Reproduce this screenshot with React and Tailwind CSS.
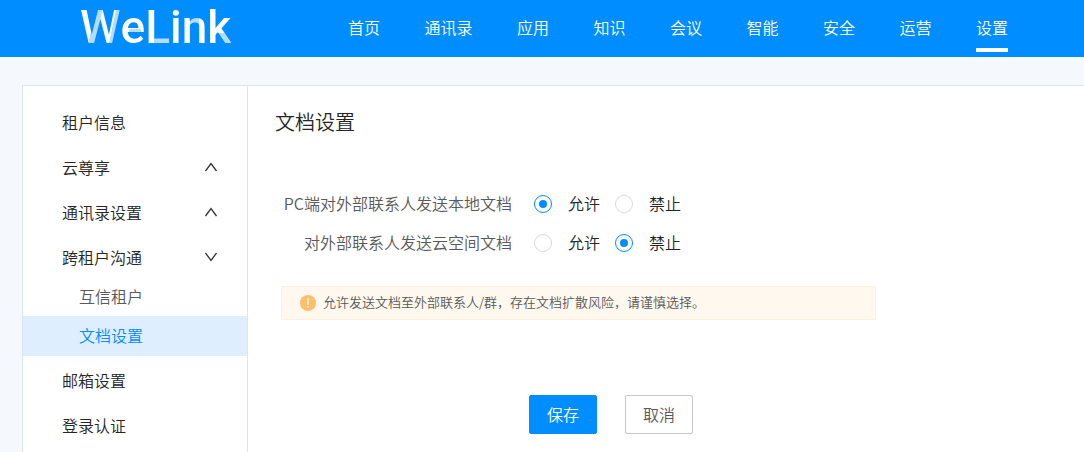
import { useState } from "react";

const NAV = ["首页", "通讯录", "应用", "知识", "会议", "智能", "安全", "运营", "设置"];

const MENU = [
  { label: "租户信息" },
  { label: "云尊享", arrow: "up" },
  { label: "通讯录设置", arrow: "up" },
  { label: "跨租户沟通", arrow: "down", children: ["互信租户", "文档设置"] },
  { label: "邮箱设置" },
  { label: "登录认证" },
];

function Logo() {
  return (
    <a
      href="#"
      aria-label="WeLink"
      className="flex font-['Roboto',sans-serif] text-[46px] leading-[55px] font-medium text-transparent"
    >
      <span className="bg-[linear-gradient(102deg,#fff_33%,#b5dcff_34%,#b5dcff_46%,#fff_47%,#fff_72%,#b5dcff_73%)] bg-clip-text">W</span>
      <span className="bg-white bg-[linear-gradient(#b5dcff,#b5dcff)] bg-size-[12px_5px] bg-position-[8px_29px] bg-no-repeat bg-clip-text">e</span>
      <span className="bg-white bg-[linear-gradient(#b5dcff,#b5dcff)] bg-size-[20px_8px] bg-position-[9px_37px] bg-no-repeat bg-clip-text">L</span>
      <span className="bg-white bg-clip-text">i</span>
      <span className="bg-white bg-[linear-gradient(#b5dcff,#b5dcff)] bg-size-[9px_8px] bg-position-[8px_18px] bg-no-repeat bg-clip-text">n</span>
      <span className="bg-white bg-[linear-gradient(#b5dcff,#b5dcff)] bg-size-[20px_14px] bg-position-[9px_33px] bg-no-repeat bg-clip-text">k</span>
    </a>
  );
}

function Chevron({ direction }) {
  return (
    <svg viewBox="0 0 14 14" className="size-[14px]" fill="none" stroke="#333" strokeWidth="1.3" aria-hidden="true">
      <path d={direction === "up" ? "M1.5 11 7 3.5l5.5 7.5" : "M1.5 3 7 10.5l5.5-7.5"} />
    </svg>
  );
}

function Sidebar() {
  return (
    <aside className="w-[225px] shrink-0 border-r border-[#dbe5f0] pt-3">
      <ul>
        {MENU.map((item) => (
          <li key={item.label}>
            <a href="#" className="flex items-center justify-between pt-3 pr-[29px] pb-[9px] pl-[39px] leading-6 text-[#252525]">
              {item.label}
              {item.arrow && <Chevron direction={item.arrow} />}
            </a>
            {item.children && (
              <ul>
                {item.children.map((child) => (
                  <li key={child}>
                    <a
                      href="#"
                      className={
                        child === "文档设置"
                          ? "flex h-10 items-center bg-[#deeeff] pb-0.5 pl-14 text-[#008dff]"
                          : "flex h-[38px] items-center pb-0.5 pl-14 text-[#595959]"
                      }
                    >
                      {child}
                    </a>
                  </li>
                ))}
              </ul>
            )}
          </li>
        ))}
      </ul>
    </aside>
  );
}

function RadioRow({ name, label, initial }) {
  const [value, setValue] = useState(initial);
  return (
    <div role="radiogroup" aria-labelledby={name} className="flex h-[39px] items-center">
      <span id={name} className="w-[264px] pb-0.5 text-right text-[#595959]">{label}</span>
      <div className="ml-[22px] flex gap-[15px]">
        {["允许", "禁止"].map((option) => (
          <label key={option} className="flex items-center gap-4 text-[#252525]">
            <input
              type="radio"
              name={name}
              checked={value === option}
              onChange={() => setValue(option)}
              className="size-[18px] appearance-none rounded-full border border-[#d9d9d9] bg-white bg-clip-content p-1 checked:border-[#008dff] checked:bg-[#008dff]"
            />
            <span className="pb-0.5">{option}</span>
          </label>
        ))}
      </div>
    </div>
  );
}

export default function App() {
  return (
    <div className="flex min-h-screen flex-col bg-[#f5f9fd] font-['Noto_Sans_CJK_SC',sans-serif] text-base font-[350]">
      <header className="flex h-[57px] bg-[#008dff] pl-20">
        <div className="w-[268px] shrink-0">
          <Logo />
        </div>
        <nav className="flex w-[660px] justify-between text-white">
          {NAV.map((item) => (
            <a
              key={item}
              href="#"
              className={
                item === "设置"
                  ? "mb-[5px] border-b-4 border-white pt-[15px] leading-6"
                  : "mb-[5px] border-b-4 border-transparent pt-[15px] leading-6"
              }
            >
              {item}
            </a>
          ))}
        </nav>
      </header>

      <div className="mt-7 ml-[22px] flex grow border-t border-l border-[#dbe5f0] bg-white">
        <Sidebar />
        <main className="grow pb-[18px]">
          <h1 className="pt-5 pl-[27px] text-xl leading-8 text-[#252525]">文档设置</h1>
          <form className="mt-[46px]" onSubmit={(event) => event.preventDefault()}>
            <RadioRow name="local-docs" label="PC端对外部联系人发送本地文档" initial="允许" />
            <RadioRow name="cloud-docs" label="对外部联系人发送云空间文档" initial="禁止" />
            <div className="mt-6 ml-[33px] flex h-[34px] max-w-[595px] items-center gap-[7px] border border-[#fef2dc] bg-[#fff8ee] pl-[18px] text-[13px] text-[#595959]">
              <svg viewBox="0 0 16 16" className="size-4 shrink-0" aria-hidden="true">
                <circle cx="8" cy="8" r="8" fill="#ffbe69" />
                <path d="M8 3v7M8 11.5v1.5" stroke="#fff" strokeWidth="1.3" />
              </svg>
              <p className="pb-0.5">允许发送文档至外部联系人/群，存在文档扩散风险，请谨慎选择。</p>
            </div>
            <div className="mt-[75px] ml-[281px] flex gap-7">
              <button type="submit" className="h-[39px] rounded-xs border border-[#008dff] bg-[#008dff] px-[17px] pb-0.5 text-white">
                保存
              </button>
              <button type="button" className="h-[39px] rounded-xs border border-[#c8c8c8] bg-white px-[17px] pb-0.5 text-[#595959]">
                取消
              </button>
            </div>
          </form>
        </main>
      </div>
    </div>
  );
}
